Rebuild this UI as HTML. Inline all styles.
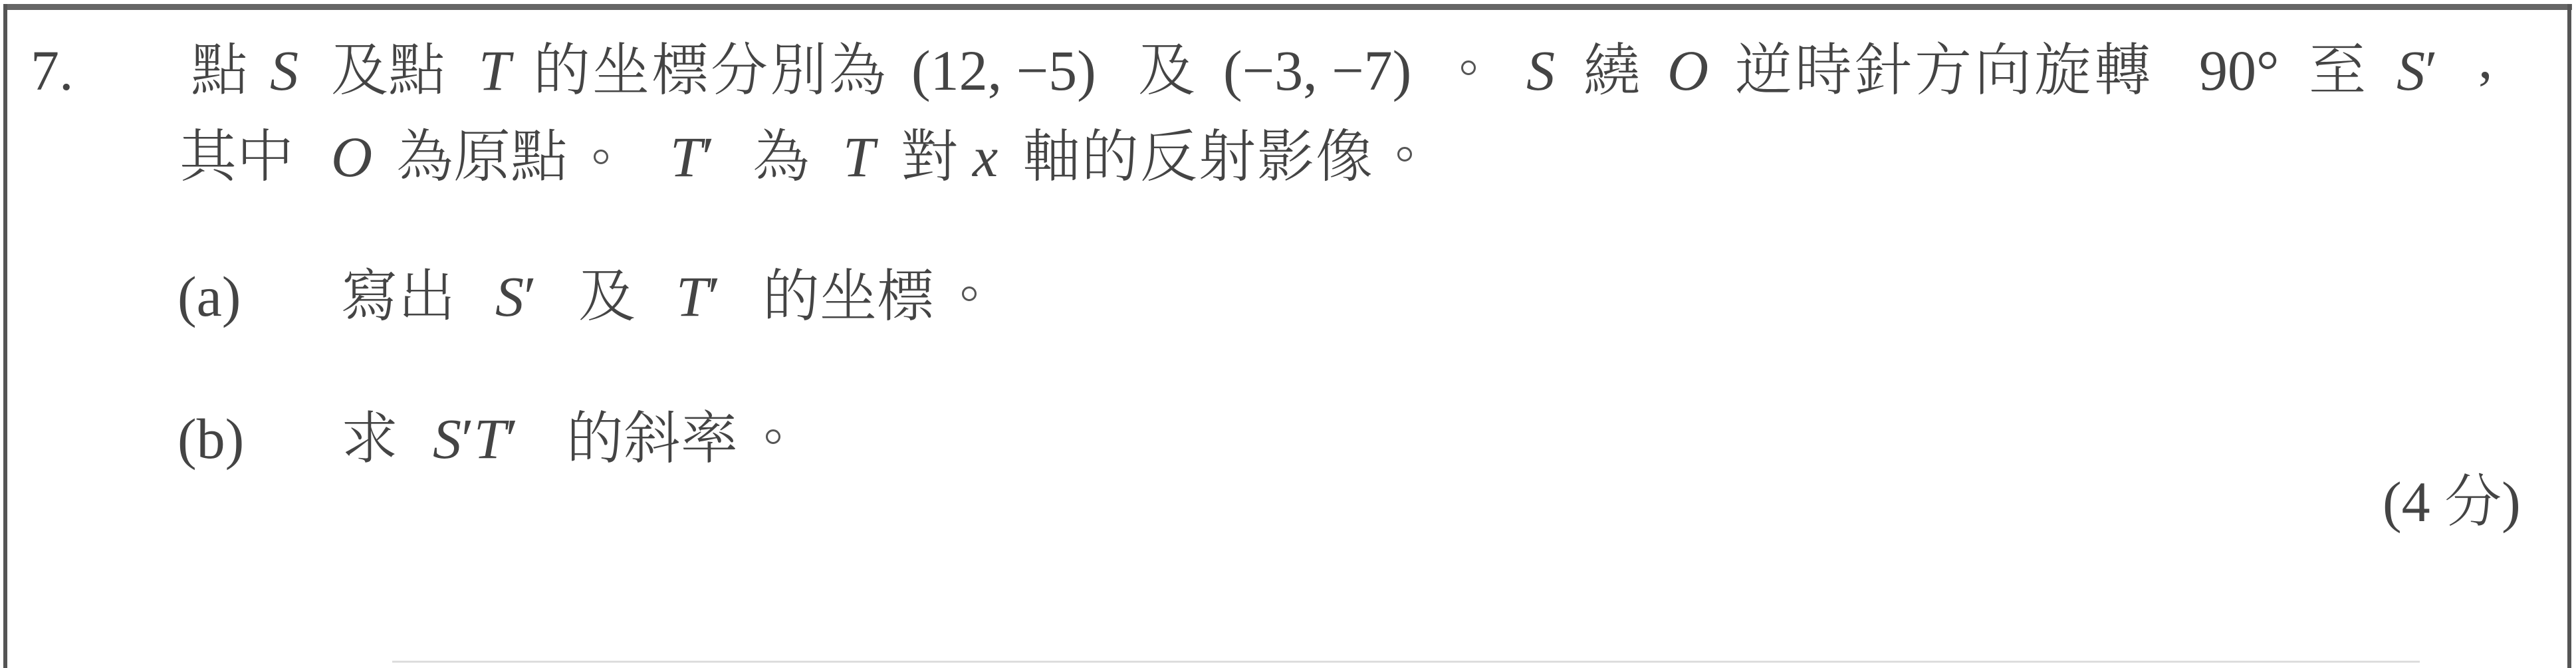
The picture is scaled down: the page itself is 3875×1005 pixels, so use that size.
<!DOCTYPE html>
<html><head><meta charset="utf-8"><style>
html,body{margin:0;padding:0;background:#fff;}
body{width:3875px;height:1005px;position:relative;overflow:hidden;}
.b{position:absolute;background:#555;}
span{position:absolute;white-space:nowrap;font-family:"Liberation Serif","Noto Serif CJK SC",serif;font-size:86px;line-height:86px;height:86px;color:#444;font-weight:300;}
i{font-style:italic;}
.c{position:absolute;width:16px;height:16px;border:3px solid #555;border-radius:50%;}
</style></head><body>
<div class="b" style="left:5px;top:6px;width:3864px;height:9px;background:#666"></div>
<div class="b" style="left:5px;top:6px;width:6px;height:999px"></div>
<div class="b" style="left:3862px;top:6px;width:6px;height:999px"></div>
<div class="b" style="left:590px;top:994px;width:3050px;height:3px;background:#ddd"></div>

<span style="left:46px;top:63px">7.</span>
<span style="left:287px;top:63px">點</span>
<span style="left:406px;top:63px"><i>S</i></span>
<span style="left:498px;top:63px">及點</span>
<span style="left:720px;top:63px"><i>T</i></span>
<span style="left:802px;top:63px;letter-spacing:3px">的坐標分別為</span>
<span style="left:1371px;top:63px">(12, −5)</span>
<span style="left:1712px;top:63px">及</span>
<span style="left:1840px;top:63px">(−3, −7)</span>
<div class="c" style="left:2198px;top:91px"></div>
<span style="left:2296px;top:63px"><i>S</i></span>
<span style="left:2382px;top:63px">繞</span>
<span style="left:2508px;top:63px"><i>O</i></span>
<span style="left:2610px;top:63px;letter-spacing:4px">逆時針方向旋轉</span>
<span style="left:3308px;top:63px">90°</span>
<span style="left:3473px;top:63px">至</span>
<span style="left:3605px;top:63px"><i>S</i>′</span>
<span style="left:3728px;top:45px">,</span>

<span style="left:270px;top:193px">其中</span>
<span style="left:498px;top:193px"><i>O</i></span>
<span style="left:596px;top:193px">為原點</span>
<div class="c" style="left:893px;top:225px"></div>
<span style="left:1008px;top:193px"><i>T</i>′</span>
<span style="left:1132px;top:193px">為</span>
<span style="left:1268px;top:193px"><i>T</i></span>
<span style="left:1355px;top:193px">對</span>
<span style="left:1463px;top:193px"><i>x</i></span>
<span style="left:1539px;top:193px;letter-spacing:2px">軸的反射影像</span>
<div class="c" style="left:2102px;top:221px"></div>

<span style="left:267px;top:403px">(a)</span>
<span style="left:513px;top:403px">寫出</span>
<span style="left:745px;top:403px"><i>S</i>′</span>
<span style="left:870px;top:403px">及</span>
<span style="left:1017px;top:403px"><i>T</i>′</span>
<span style="left:1147px;top:403px">的坐標</span>
<div class="c" style="left:1447px;top:431px"></div>

<span style="left:267px;top:617px">(b)</span>
<span style="left:513px;top:617px">求</span>
<span style="left:651px;top:617px"><i>S</i>′<i>T</i>′</span>
<span style="left:852px;top:617px">的斜率</span>
<div class="c" style="left:1152px;top:646px"></div>

<span style="left:3584px;top:712px">(4 分)</span>
</body></html>
